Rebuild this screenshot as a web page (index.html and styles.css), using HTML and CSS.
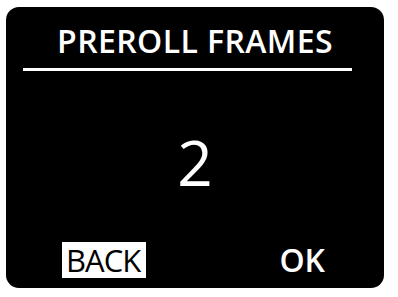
FILE: index.html
```
<!DOCTYPE html>
<html>
<head>
<meta charset="utf-8">
<link rel="stylesheet" href="styles.css">
</head>
<body>
<div class="screen">
  <div class="title">PREROLL FRAMES</div>
  <div class="rule"></div>
  <div class="value">2</div>
  <div class="footer">
    <span class="btn selected">BACK</span>
    <span class="btn">OK</span>
  </div>
</div>
</body>
</html>
```
FILE: styles.css
```
html, body {
  margin: 0;
  padding: 0;
  background: #ffffff;
}
body {
  padding: 7px 0 0 6px;
  font-family: "Open Sans", "Noto Sans", sans-serif;
}
.screen {
  width: 378px;
  height: 281px;
  background: #000000;
  border-radius: 13px;
  box-sizing: border-box;
  padding-top: 12px;
  display: flex;
  flex-direction: column;
  color: #ffffff;
}
.title {
  font-size: 32px;
  font-weight: 600;
  letter-spacing: 0.4px;
  line-height: normal;
  text-align: center;
  height: 44px;
}
.rule {
  height: 3px;
  background: #ffffff;
  margin: 5px 32px 0 17px;
}
.value {
  margin-top: 49px;
  font-size: 62px;
  line-height: normal;
  text-align: center;
  height: 71px;
}
.footer {
  margin-top: auto;
  margin-bottom: 10px;
  display: flex;
  justify-content: space-between;
  align-items: center;
  padding: 0 54px 0 56px;
}
.btn {
  font-size: 32px;
  font-weight: 600;
  line-height: 36px;
  padding: 0 5px;
  color: #ffffff;
}
.btn.selected {
  font-size: 31px;
  font-weight: 500;
  letter-spacing: -1px;
  padding: 0 6px 0 4px;
  background: #ffffff;
  color: #000000;
}
```
